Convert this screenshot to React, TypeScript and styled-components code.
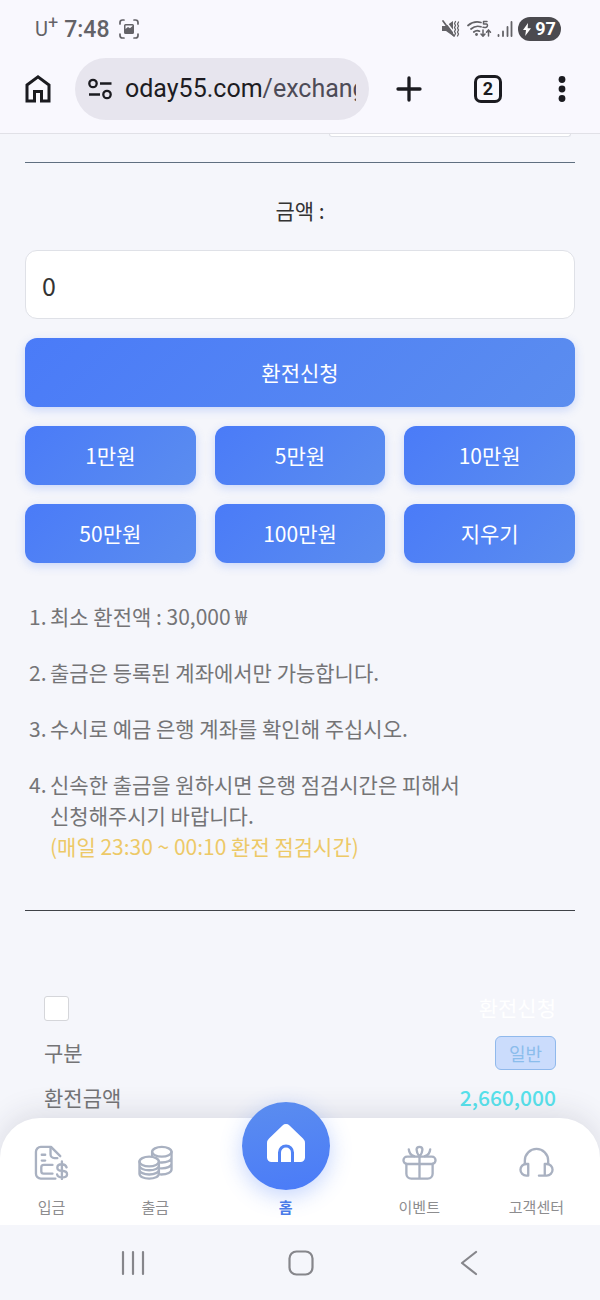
import React, { useState } from "react";
import styled, { createGlobalStyle, css } from "styled-components";

const Global = createGlobalStyle`
  *, *::before, *::after { box-sizing: border-box; }
  body {
    margin: 0;
    background: #f5f6fb;
    color: #333;
    font-family: "Noto Sans CJK KR", "Noto Sans", sans-serif;
    font-size: 21px;
  }
  button, input { font: inherit; color: inherit; }
  button { border: 0; padding: 0; background: none; cursor: pointer; }
  svg { display: block; flex: none; }
`;

const Screen = styled.div`
  display: flex;
  flex-direction: column;
  min-height: 100vh;
`;

/* ---------- phone status bar ---------- */

const StatusBar = styled.div`
  display: flex;
  align-items: center;
  justify-content: space-between;
  height: 58px;
  padding: 0 39px 0 35px;
  background: #f9f8fe;
  color: #636267;
  font-family: Roboto, sans-serif;
`;

const StatusGroup = styled.div<{ $gap: number }>`
  display: flex;
  align-items: center;
  gap: ${(p) => p.$gap}px;
`;

const Carrier = styled.span`
  display: flex;
  font-size: 20px;
  line-height: 24px;
  sup {
    font-size: 18px;
    line-height: 12px;
  }
`;

const Clock = styled.span`
  padding-top: 2px;
  font-size: 23px;
  font-weight: 500;
  line-height: 26px;
`;

const Battery = styled.span`
  display: flex;
  align-items: center;
  justify-content: center;
  gap: 4px;
  width: 43px;
  height: 24px;
  border-radius: 12px;
  background: #4b4a4f;
  color: #fff;
  font-size: 18px;
  font-weight: 700;
  line-height: 24px;
`;

/* ---------- browser toolbar ---------- */

const Toolbar = styled.header`
  display: flex;
  align-items: center;
  padding: 0 29px 13px 24px;
  border-bottom: 1px solid #e1e1e7;
  background: #f9f8fe;
  color: #1b1b20;
  font-family: Roboto, sans-serif;
`;

const ToolButton = styled.button<{ $width: number }>`
  display: flex;
  flex: none;
  align-items: center;
  justify-content: center;
  width: ${(p) => p.$width}px;
  height: 48px;
`;

const AddressBar = styled.div`
  display: flex;
  flex: 1;
  align-items: center;
  gap: 12px;
  min-width: 0;
  height: 62px;
  margin: 0 26px 0 23px;
  padding: 0 13px;
  border-radius: 31px;
  background: #e7e5ee;
`;

const Url = styled.button`
  flex: 1;
  min-width: 0;
  overflow: hidden;
  color: #4d4b57;
  font-size: 25px;
  line-height: 36px;
  text-align: left;
  white-space: nowrap;
  b {
    color: #1d1c22;
    font-weight: 400;
  }
`;

const Actions = styled.div`
  display: flex;
  gap: 48px;
`;

const TabCount = styled.span`
  display: flex;
  align-items: center;
  justify-content: center;
  width: 28px;
  height: 28px;
  border: 3px solid;
  border-radius: 7px;
  font-size: 18px;
  font-weight: 700;
  line-height: 22px;
`;

/* ---------- page ---------- */

const Page = styled.main`
  flex: 1;
  padding: 0 25px 3px;
`;

const FieldEnd = styled.div`
  width: 44%;
  height: 3px;
  margin: 0 4px 25px auto;
  border: 1px solid #dfe1e7;
  border-top: 0;
  border-radius: 0 0 10px 10px;
  background: #fff;
`;

const Rule = styled.hr<{ $color: string }>`
  height: 1px;
  margin: 0;
  border: 0;
  background: ${(p) => p.$color};
`;

const AmountLabel = styled.label`
  display: block;
  padding: 31px 0 24px;
  line-height: 32px;
  text-align: center;
`;

const AmountInput = styled.input`
  display: block;
  width: 100%;
  height: 69px;
  margin-bottom: 19px;
  padding: 0 16px;
  border: 1px solid #dfe1e7;
  border-radius: 12px;
  outline: 0;
  background: #fff;
  font-size: 25px;
`;

const BlueButton = styled.button<{ $tall?: boolean }>`
  height: ${(p) => (p.$tall ? 69 : 59)}px;
  padding-bottom: 2px;
  border-radius: 12px;
  background: linear-gradient(135deg, #4a7bf8, #5b8def);
  box-shadow: 0 3px 10px rgba(74, 123, 248, 0.25);
  color: #fff;
  line-height: 32px;
  ${(p) =>
    p.$tall &&
    css`
      grid-column: 1 / -1;
    `}
`;

const ButtonGrid = styled.div`
  display: grid;
  grid-template-columns: repeat(3, 1fr);
  gap: 19px;
`;

const Notes = styled.ol`
  display: flex;
  flex-direction: column;
  gap: 25px;
  margin: 38px 0 48px;
  padding: 0 4px;
  color: #747476;
  line-height: 31px;
  list-style: none;
`;

const Note = styled.li`
  display: flex;
`;

const NoteNumber = styled.span`
  flex: none;
  width: 21px;
`;

const Warning = styled.span`
  color: #edc967;
`;

const History = styled.section`
  display: flex;
  flex-direction: column;
  gap: 11px;
  padding: 80px 19px 0;
  color: #747476;
`;

const HistoryRow = styled.div`
  display: flex;
  align-items: center;
  justify-content: space-between;
  height: 34px;
  line-height: 32px;
`;

const Term = styled.span`
  padding-bottom: 2px;
`;

const Check = styled.input`
  width: 25px;
  height: 25px;
  margin: 0;
  border: 1px solid #d5d6da;
  border-radius: 3px;
  appearance: none;
  background: #fff;
  &:checked {
    background: #4a7bf8;
  }
`;

const RequestLabel = styled.label`
  padding-bottom: 2px;
  color: #fff;
`;

const Badge = styled.span`
  height: 34px;
  padding: 0 13px;
  border: 1px solid #90b9ec;
  border-radius: 6px;
  background: #cbdcfc;
  color: #8bbdec;
  font-size: 18px;
  line-height: 32px;
`;

const Amount = styled.strong`
  padding-bottom: 2px;
  color: #58e2ec;
  font-weight: 500;
`;

/* ---------- bottom navigation ---------- */

const BottomNav = styled.nav`
  display: flex;
  align-items: flex-end;
  justify-content: space-between;
  height: 107px;
  padding: 0 36px 7px 34px;
  border-radius: 40px 40px 0 0;
  background: #fff;
  box-shadow: 0 -4px 30px rgba(40, 40, 60, 0.13);
`;

const NavLink = styled.a<{ $active?: boolean }>`
  display: flex;
  flex-direction: column;
  align-items: center;
  gap: ${(p) => (p.$active ? 6 : 16)}px;
  color: ${(p) => (p.$active ? "#4a7be8" : "#8d8d8f")};
  font-size: 15px;
  font-weight: ${(p) => (p.$active ? 700 : 400)};
  line-height: 22px;
  text-decoration: none;
`;

const HomeDisc = styled.span`
  display: flex;
  align-items: center;
  justify-content: center;
  width: 88px;
  height: 88px;
  padding-bottom: 6px;
  border-radius: 50%;
  background: linear-gradient(170deg, #5b8def, #4a7bf8);
  box-shadow: 0 6px 22px rgba(74, 123, 248, 0.32);
`;

const SystemBar = styled.footer`
  position: relative;
  display: grid;
  grid-template-columns: repeat(3, 1fr);
  height: 75px;
  padding: 0 47px 0 49px;
  background: #f5f6fb;
  color: #86868b;
`;

const SystemButton = styled.button`
  display: flex;
  align-items: center;
  justify-content: center;
`;

/* ---------- drawings ---------- */

const stroke = {
  fill: "none",
  stroke: "currentColor",
  strokeLinecap: "round" as const,
  strokeLinejoin: "round" as const,
};

const CaptureIcon = () => (
  <svg width="20" height="20" viewBox="0 0 20 20" aria-hidden="true">
    <path {...stroke} strokeWidth="1.7" d="M1 5V3.5Q1 1 3.500 1H5M15 1h1.500Q19 1 19 3.500V5M19 15v1.500Q19 19 16.500 19H15M5 19H3.500Q1 19 1 16.500V15" />
    <path fill="currentColor" fillRule="evenodd" d="M6.500 5h7A1.500 1.500 0 0 1 15 6.500v7a1.500 1.500 0 0 1-1.500 1.500h-7A1.500 1.500 0 0 1 5 13.500v-7A1.500 1.500 0 0 1 6.500 5Zm0 5 2.500-2 2 1.200 2.500-2.200v-.5H6.500Z" />
  </svg>
);

const MuteIcon = () => (
  <svg width="20" height="18" viewBox="0 0 20 18" aria-hidden="true">
    <path fill="currentColor" d="M0 6h4l7-5v15l-7-5H0Z" />
    <path {...stroke} stroke="#f9f8fe" strokeWidth="1.500" d="m3 .5 11.500 15" />
    <path {...stroke} strokeWidth="1.700" d="m1 1 11 15" />
    <path {...stroke} strokeWidth="1.300" d="m13.500 1.500-1 2 1 2-1 2 1 2-1 2 1 2-1 2M16.500 2l-1 2 1 2-1 2 1 2-1 2 1 2-1 2" />
  </svg>
);

const WifiIcon = () => (
  <svg width="25" height="18" viewBox="0 0 25 18" aria-hidden="true">
    <g {...stroke} strokeWidth="1.700">
      <path d="M1 5.500Q7 .5 14 2.500M4 9Q8.500 5 14 6.800M6.800 12Q9.500 9.800 12.500 11.200" />
      <path strokeWidth="1.500" d="M20 1.500h-3.500v2.600q4-.8 4 1.500T16 7.300M16 10v6m-2-2L16 16.200 18 14M21.500 16v-6m-2 2.200 2-2.300 2 2.300" />
    </g>
    <circle cx="9.500" cy="14.500" r="1.400" fill="currentColor" />
  </svg>
);

const SignalIcon = () => (
  <svg width="16" height="18" viewBox="0 0 16 18" aria-hidden="true">
    <path {...stroke} strokeWidth="1.800" d="M1.500 15v1M6 11.500V16M10.500 7v9M14.500 2v14" />
  </svg>
);

const BoltIcon = () => (
  <svg width="8" height="13" viewBox="0 0 8 13" aria-hidden="true">
    <path fill="currentColor" d="M5 0 0 7h3l-.8 6L8 5.300H4.700Z" />
  </svg>
);

const HouseIcon = () => (
  <svg width="28" height="30" viewBox="0 0 28 30" aria-hidden="true">
    <path fill="none" stroke="currentColor" strokeWidth="3" d="M3 11 14 2.800 25 11V27h-7.500v-9.500h-7V27H3Z" />
  </svg>
);

const SiteInfoIcon = () => (
  <svg width="25" height="22" viewBox="0 0 25 22" aria-hidden="true">
    <g fill="none" stroke="currentColor" strokeWidth="2.300">
      <circle cx="5" cy="5.500" r="3.700" />
      <circle cx="19" cy="16.500" r="3.700" />
      <path d="M12 5.500H23.500M1 16.500h11" />
    </g>
  </svg>
);

const PlusIcon = () => (
  <svg width="26" height="26" viewBox="0 0 26 26" aria-hidden="true">
    <path {...stroke} strokeWidth="3.300" d="M13 2v22M2 13h22" />
  </svg>
);

const DotsIcon = () => (
  <svg width="8" height="28" viewBox="0 0 8 28" aria-hidden="true">
    <g fill="currentColor">
      <circle cx="4" cy="4.500" r="3.400" />
      <circle cx="4" cy="14" r="3.400" />
      <circle cx="4" cy="23.500" r="3.400" />
    </g>
  </svg>
);

const NavIcon = ({ children }: { children: React.ReactNode }) => (
  <svg width="35" height="35" viewBox="0 0 36 36" aria-hidden="true">
    <g {...stroke} stroke="#a9b1c1" strokeWidth="2.400">
      {children}
    </g>
  </svg>
);

const DepositIcon = () => (
  <NavIcon>
    <path d="M22 34.500H7a5 5 0 0 1-5-5V7a5 5 0 0 1 5-5h10.500l9.500 9.500" />
    <path d="M17 2.500v7a4 4 0 0 0 4 4h3M8 10h3.500M8 16h3.500M19 20.500h-9a2.500 2.500 0 0 0-2.500 2.500v4A2.500 2.500 0 0 0 10 29.500h9" />
    <path d="M33.500 23q-1-3.200-5-3.200-4.500 0-4.500 3.500 0 3 4.700 3.200 5.300.3 5.300 3.500 0 3.300-5 3.300-4.500 0-5.200-3M28.700 17v18" />
  </NavIcon>
);

const WithdrawIcon = () => (
  <NavIcon>
    <ellipse cx="24.500" cy="7" rx="10" ry="5" />
    <path d="M14.500 7v4.500M34.500 7V25c0 3-4 5.500-11.500 5.300M34.500 13c0 3-5 5.300-11 5M34.500 19c0 3-5 5.300-11 5" />
    <ellipse cx="11.500" cy="17" rx="10" ry="5" />
    <path d="M1.500 17V29.500c0 3 4.500 5 10 5s10-2 10-5V17M1.500 21.200c0 2.800 4.500 4.800 10 4.800s10-2 10-4.800M1.500 25.500c0 2.800 4.500 4.800 10 4.800s10-2 10-4.800" />
  </NavIcon>
);

const EventIcon = () => (
  <NavIcon>
    <rect x="1.500" y="12" width="33" height="7.500" rx="3.700" />
    <path d="M4.500 19.500v10a5 5 0 0 0 5 5h17a5 5 0 0 0 5-5v-10M18 12v22.500" />
    <path d="M18 12c-2-2.500-3-5-3-7a3 3 0 0 1 6 0c0 2-1 4.500-3 7ZM7 4.500q.5 5.500 5.500 7M29 4.500q-.5 5.500-5.500 7" />
  </NavIcon>
);

const SupportIcon = () => (
  <NavIcon>
    <path d="M6 19.500V16a12 12 0 0 1 24 0v3.500" />
    <path d="M9.500 19.500v12H7.500a6 6 0 0 1 0-12ZM26.500 19.500v12h2a6 6 0 0 0 0-12ZM26.500 31.500h-6" />
  </NavIcon>
);

const HomeFilledIcon = () => (
  <svg width="38" height="40" viewBox="0 0 38 40" aria-hidden="true">
    <path fill="#fff" d="M15.500 2.500a5 5 0 0 1 7 0L36 15.500q2 2 2 4.500v14.500a4.500 4.500 0 0 1-4.500 4.500H27V29.500a8 8 0 0 0-16 0V39H4.500A4.500 4.500 0 0 1 0 34.500V20q0-2.500 2-4.500Z" />
    <path fill="#fff" d="M14 39V29.500a5 5 0 0 1 10 0V39Z" />
  </svg>
);

const RecentsIcon = () => (
  <svg width="26" height="26" viewBox="0 0 26 26" aria-hidden="true">
    <path {...stroke} strokeWidth="2.200" d="M3 2v22M13 2v22M23 2v22" />
  </svg>
);

const HomeKeyIcon = () => (
  <svg width="26" height="26" viewBox="0 0 26 26" aria-hidden="true">
    <rect {...stroke} strokeWidth="2.200" x="1.500" y="1.500" width="23" height="23" rx="7" />
  </svg>
);

const BackIcon = () => (
  <svg width="26" height="26" viewBox="0 0 26 26" aria-hidden="true">
    <path {...stroke} strokeWidth="2.200" d="M20 2 6 13l14 11" />
  </svg>
);

/* ---------- data ---------- */

const presets = [
  { label: "1만원", value: 10000 },
  { label: "5만원", value: 50000 },
  { label: "10만원", value: 100000 },
  { label: "50만원", value: 500000 },
  { label: "100만원", value: 1000000 },
];

const notes: React.ReactNode[] = [
  "최소 환전액 : 30,000 ₩",
  "출금은 등록된 계좌에서만 가능합니다.",
  "수시로 예금 은행 계좌를 확인해 주십시오.",
  <>
    신속한 출금을 원하시면 은행 점검시간은 피해서
    <br />
    신청해주시기 바랍니다.
    <br />
    <Warning>(매일 23:30 ~ 00:10 환전 점검시간)</Warning>
  </>,
];

export default function App() {
  const [amount, setAmount] = useState(0);

  return (
    <Screen>
      <Global />
      <StatusBar>
        <StatusGroup $gap={10}>
          <StatusGroup $gap={6}>
            <Carrier>
              U<sup>+</sup>
            </Carrier>
            <Clock>7:48</Clock>
          </StatusGroup>
          <CaptureIcon />
        </StatusGroup>
        <StatusGroup $gap={5}>
          <MuteIcon />
          <WifiIcon />
          <SignalIcon />
          <Battery>
            <BoltIcon />
            97
          </Battery>
        </StatusGroup>
      </StatusBar>

      <Toolbar>
        <ToolButton $width={28} aria-label="홈페이지">
          <HouseIcon />
        </ToolButton>
        <AddressBar>
          <ToolButton $width={25} aria-label="사이트 정보">
            <SiteInfoIcon />
          </ToolButton>
          <Url>
            <b>oday55.com</b>/exchang
          </Url>
        </AddressBar>
        <Actions>
          <ToolButton $width={28} aria-label="새 탭">
            <PlusIcon />
          </ToolButton>
          <ToolButton $width={34} aria-label="탭 전환">
            <TabCount>2</TabCount>
          </ToolButton>
          <ToolButton $width={18} aria-label="메뉴">
            <DotsIcon />
          </ToolButton>
        </Actions>
      </Toolbar>

      <Page>
        <FieldEnd />
        <Rule $color="#5f6f80" />
        <AmountLabel htmlFor="amount">금액 :</AmountLabel>
        <AmountInput
          id="amount"
          inputMode="numeric"
          value={amount}
          onChange={(e) => setAmount(Number(e.target.value.replace(/\D/g, "")))}
        />
        <ButtonGrid>
          <BlueButton $tall>환전신청</BlueButton>
          {presets.map((p) => (
            <BlueButton key={p.value} onClick={() => setAmount(amount + p.value)}>
              {p.label}
            </BlueButton>
          ))}
          <BlueButton onClick={() => setAmount(0)}>지우기</BlueButton>
        </ButtonGrid>

        <Notes>
          {notes.map((note, i) => (
            <Note key={i}>
              <NoteNumber>{i + 1}.</NoteNumber>
              <span>{note}</span>
            </Note>
          ))}
        </Notes>
        <Rule $color="#3f4247" />

        <History>
          <HistoryRow>
            <Check type="checkbox" id="request" />
            <RequestLabel htmlFor="request">환전신청</RequestLabel>
          </HistoryRow>
          <HistoryRow>
            <Term>구분</Term>
            <Badge>일반</Badge>
          </HistoryRow>
          <HistoryRow>
            <Term>환전금액</Term>
            <Amount>2,660,000</Amount>
          </HistoryRow>
        </History>
      </Page>

      <BottomNav>
        <NavLink href="#deposit">
          <DepositIcon />
          입금
        </NavLink>
        <NavLink href="#withdraw">
          <WithdrawIcon />
          출금
        </NavLink>
        <NavLink href="#home" $active>
          <HomeDisc>
            <HomeFilledIcon />
          </HomeDisc>
          홈
        </NavLink>
        <NavLink href="#event">
          <EventIcon />
          이벤트
        </NavLink>
        <NavLink href="#support">
          <SupportIcon />
          고객센터
        </NavLink>
      </BottomNav>

      <SystemBar>
        <SystemButton aria-label="최근 앱">
          <RecentsIcon />
        </SystemButton>
        <SystemButton aria-label="홈 화면">
          <HomeKeyIcon />
        </SystemButton>
        <SystemButton aria-label="뒤로">
          <BackIcon />
        </SystemButton>
      </SystemBar>
    </Screen>
  );
}
